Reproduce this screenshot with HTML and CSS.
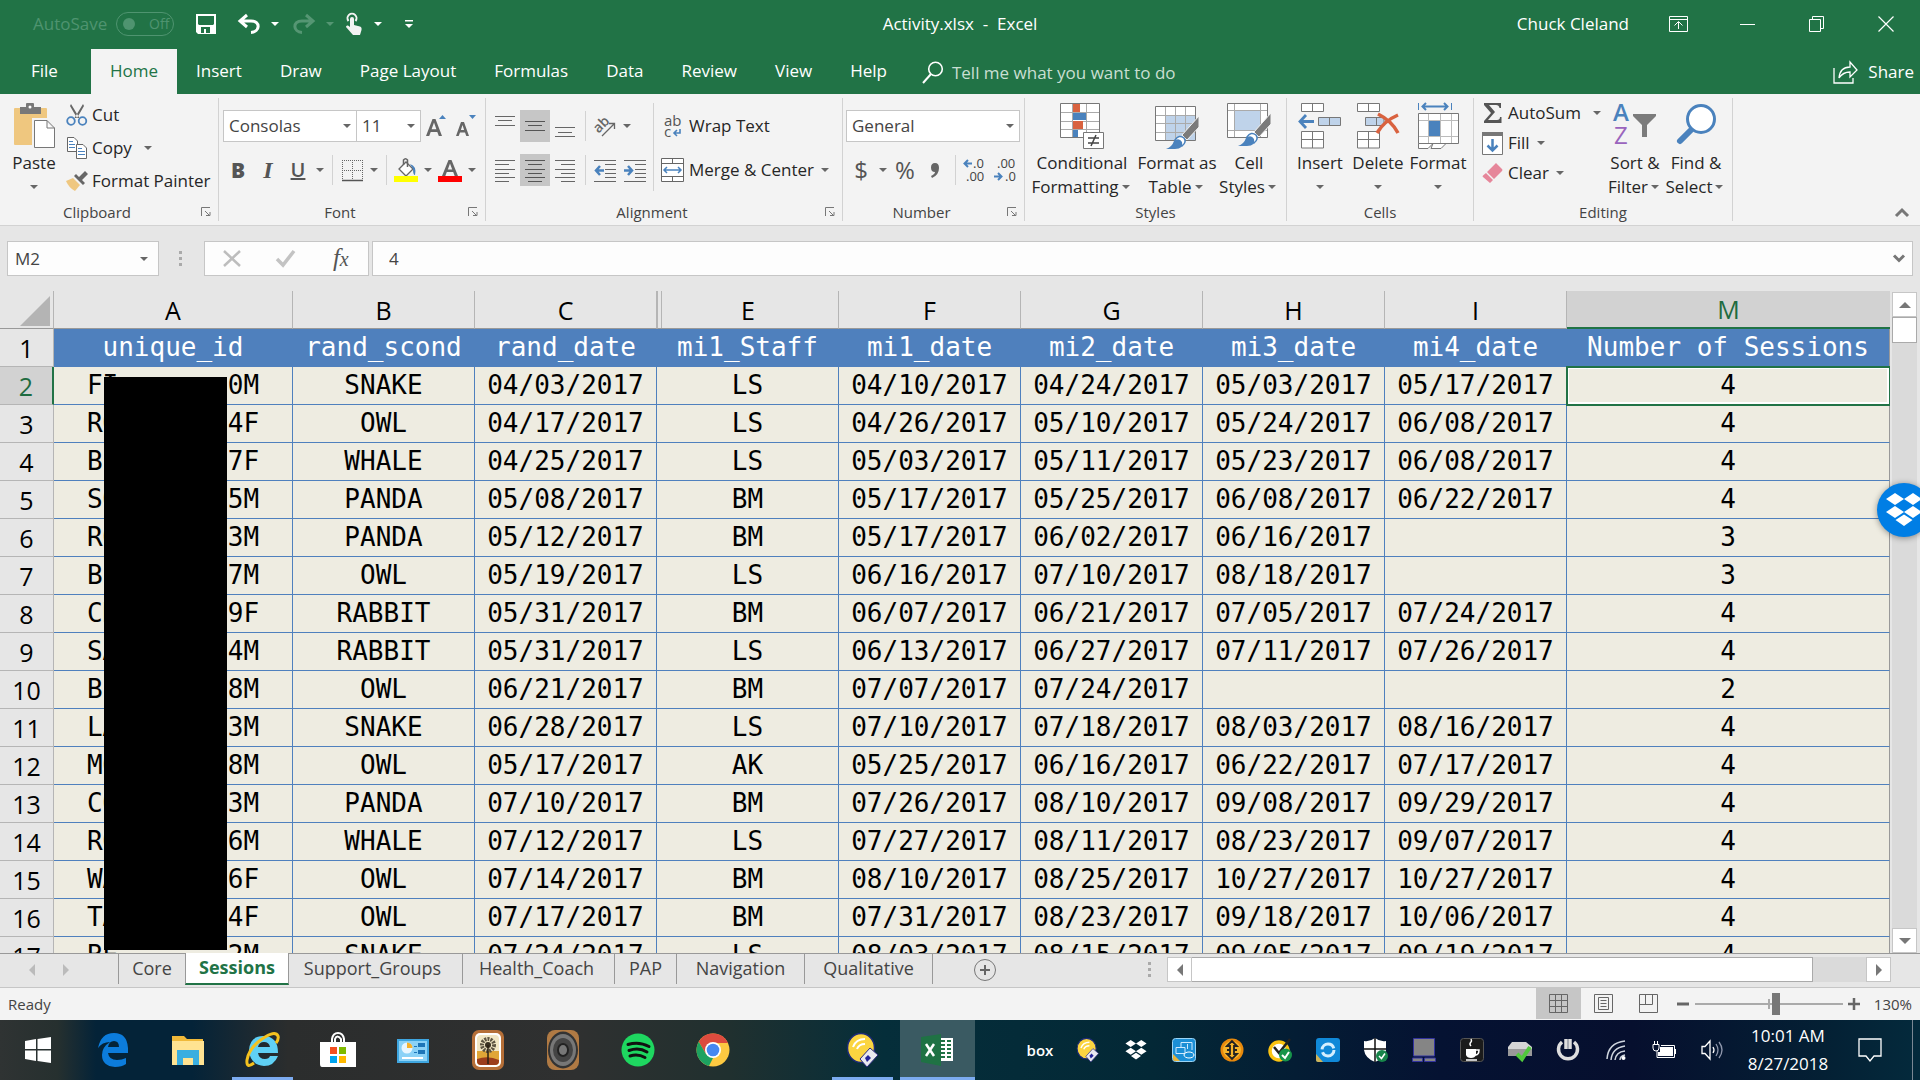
FILE: index.html
```html
<!DOCTYPE html>
<html lang="en">
<head>
<meta charset="utf-8">
<title>Activity.xlsx - Excel</title>
<link rel="stylesheet" href="styles.css">
</head>
<body>
<header class="titlebar">
  <div class="quick">
    <label class="autosave" for="autosave">AutoSave</label>
    <button class="toggle" id="autosave" disabled><span class="knob"></span>Off</button>
    <button class="qbtn save" aria-label="Save"><svg width="20" height="20" viewBox="0 0 20 20"><path fill="#fff" fill-rule="evenodd" d="M0 0H20V20H2L0 18ZM2 2V10L3 11H17L18 10V2ZM5 13V19H8V15H10V19H14V13Z"/></svg></button>
    <button class="qbtn undo" aria-label="Undo"><svg width="22" height="20" viewBox="0 0 22 20"><path fill="none" stroke="#fff" stroke-width="3" d="M9 1L2 7L9 13M2 7H13C23 7 22 18 13 18.500"/></svg></button><i class="caret light"></i>
    <button class="qbtn redo" aria-label="Redo"><svg width="22" height="20" viewBox="0 0 22 20"><path fill="none" stroke="#559673" stroke-width="3" d="M13 1L20 7L13 13M20 7H9C-1 7 0 18 9 18.500"/></svg></button><i class="caret dim"></i>
    <button class="qbtn touch" aria-label="Touch mode"><svg width="18" height="22" viewBox="0 0 18 22"><path fill="#f3f3f3" d="M5 6a2 2 0 0 1 4 0V12L15 13.500Q17 14 16.500 17L15 22H8L1 14Q1 12 3 12.500L5 14Z"/><path d="M3.500 8A4.500 4.500 0 1 1 10.500 8" fill="none" stroke="#f3f3f3" stroke-width="2"/></svg></button><i class="caret light"></i>
    <button class="qbtn custom" aria-label="Customize toolbar"><svg width="8" height="8" viewBox="0 0 8 8"><path fill="#fff" d="M0 0H8V1.500H0ZM0 4H8L4 8Z"/></svg></button>
  </div>
  <div class="doc">Activity.xlsx&nbsp; -&nbsp; Excel</div>
  <div class="window">
    <span class="user">Chuck Cleland</span>
    <button aria-label="Ribbon options"><svg width="19" height="16" viewBox="0 0 19 16"><path fill="none" stroke="#fff" d="M.5.5H18.500V15.500H.5ZM.5 3.500H18.500M9.500 13V6M5.500 9.500L9.500 5.500L13.500 9.500"/></svg></button>
    <button aria-label="Minimize"><svg width="15" height="16" viewBox="0 0 15 16"><path stroke="#fff" d="M0 8.500H15"/></svg></button>
    <button aria-label="Restore"><svg width="15" height="16" viewBox="0 0 15 16"><path fill="none" stroke="#fff" d="M.5 3.500H11.500V15.500H.5ZM3.500 3.500V.5H14.500V12.500H11.500"/></svg></button>
    <button aria-label="Close"><svg width="16" height="16" viewBox="0 0 16 16"><path stroke="#fff" stroke-width="1.200" d="M.5.5L15.500 15.500M15.500.5L.5 15.500"/></svg></button>
  </div>
</header>
<nav class="tabs">
  <button class="file">File</button><button class="active">Home</button><button>Insert</button><button>Draw</button><button>Page Layout</button><button>Formulas</button><button>Data</button><button>Review</button><button>View</button><button>Help</button>
  <button class="tell"><svg width="22" height="24" viewBox="0 0 22 24"><circle cx="13.500" cy="8" r="6.800" fill="none" stroke="#fff" stroke-width="1.600"/><path d="M9 13L1 22" stroke="#fff" stroke-width="2"/></svg>Tell me what you want to do</button>
  <button class="share"><svg width="25" height="23" viewBox="0 0 25 23"><path fill="none" stroke="#fff" stroke-width="1.300" d="M1 7V22H20V17M6 17Q7 6 17 6V1L24 9L17 16V11Q10 11 6 17Z"/></svg>Share</button>
</nav>

<section class="ribbon">
  <div class="group g-clip">
    <div class="body">
      <button class="big paste"><svg width="42" height="46" viewBox="0 0 42 46"><path fill="#efc77f" d="M2 5H33Q34 5 34 6V42H2Q1 42 1 41V6Q1 5 2 5Z"/><path fill="#787878" d="M7 11V4H13V1Q13 0 14 0H20Q21 0 21 1V4H28V11Z"/><circle cx="17" cy="4" r="1.500" fill="#fff"/><path fill="#fff" stroke="#f3f3f3" stroke-width="4" d="M21 17H34L41 24V45H21Z"/><path fill="#fff" stroke="#777" d="M21.500 17.500H34L41.500 25V44.500H21.500ZM34 17.500V25H41.500"/></svg><span>Paste</span><span><i class="caret"></i></span></button>
      <div class="rows tall">
        <button><svg width="22" height="22" viewBox="0 0 22 22"><path fill="#666" d="M5 0L13.500 14H11L4 2ZM17 0L8.500 14H11L18 2Z"/><g fill="none" stroke="#4a82bd" stroke-width="1.800"><circle cx="5" cy="17" r="3.800"/><circle cx="16.500" cy="17" r="3.800"/></g></svg>Cut</button>
        <button><svg width="22" height="22" viewBox="0 0 22 22"><g fill="#fff" stroke="#666"><path d="M1.500.5H8L11.500 4V14.500H1.500Z"/><path d="M10.500 7.500H17L20.500 11V21.500H10.500Z"/></g><path stroke="#4a82bd" d="M3 4.500H7M3 7.500H9M3 10.500H9M12 11.500H16M12 14.500H19M12 17.500H19"/></svg>Copy<i class="caret wide"></i></button>
        <button><svg width="22" height="20" viewBox="0 0 22 20"><path fill="#efc77f" d="M0 10L7 7L14 14L9 20Q3 17 0 10Z"/><path fill="#666" d="M8 5L10 3L13 6L19 0L22 3L16 9L19 12L17 14Z"/></svg>Format Painter</button>
      </div>
    </div>
    <div class="foot"><span>Clipboard</span><button aria-label="Clipboard settings"><svg width="10" height="10" viewBox="0 0 10 10"><path fill="none" stroke="#777" d="M.5 9V.5H9M4 4L8 8M9 5V8.500H5"/></svg></button></div>
  </div>

  <div class="group g-font">
    <div class="body lines">
      <div class="line">
        <select class="combo font-name" aria-label="Font"><option>Consolas</option></select><select class="combo font-size" aria-label="Font size"><option>11</option></select>
        <button class="ic" aria-label="Increase font size"><svg width="20" height="22" viewBox="0 0 20 22"><path fill="#666" fill-rule="evenodd" d="M0 21L6.500 4H9.500L16 21H12.800L11.300 17H4.700L3.200 21ZM5.600 14.300H10.400L8 7.500Z"/><path fill="#4a82bd" d="M13 4L16.500 0L20 4Z"/></svg></button>
        <button class="ic" aria-label="Decrease font size"><svg width="20" height="22" viewBox="0 0 20 22"><path fill="#666" fill-rule="evenodd" d="M0 21L5 7H8L13 21H10.300L9 17.500H4L2.700 21ZM4.900 15H8.100L6.500 10Z"/><path fill="#4a82bd" d="M13 0H20L16.500 4Z"/></svg></button>
      </div>
      <div class="line">
        <button class="ic bold">B</button><button class="ic italic">I</button><button class="ic under">U</button><i class="caret"></i><i class="sep"></i>
        <button class="ic" aria-label="Borders"><svg width="21" height="21" viewBox="0 0 21 21"><path fill="none" stroke="#666" stroke-dasharray="1 1" d="M0 .5H21M.5 0V20M20.500 0V20M10.500 0V20M0 10.500H21"/><path stroke="#555" stroke-width="1.500" d="M0 20.500H21"/></svg></button><i class="caret"></i><i class="sep"></i>
        <button class="ic" aria-label="Fill color"><svg width="24" height="24" viewBox="0 0 24 24"><path fill="#fff" stroke="#666" stroke-width="1.300" d="M5 11L12 4L19 11L12 18Z"/><path fill="none" stroke="#666" stroke-width="1.500" d="M9.500 7V2Q11.500-.5 13.500 2V9"/><path fill="#4a82bd" d="M16 6Q23 8 21 17Q19 17 19 11Z"/><path fill="#ff0" d="M0 18H24V24H0Z"/></svg></button><i class="caret"></i>
        <button class="ic" aria-label="Font color"><svg width="24" height="24" viewBox="0 0 24 24"><path fill="#666" fill-rule="evenodd" d="M4 18L10.500 2H13.500L20 18H16.700L15.200 14H8.800L7.300 18ZM9.800 11.500H14.200L12 5.500Z"/><path fill="red" d="M0 18H24V24H0Z"/></svg></button><i class="caret"></i>
      </div>
    </div>
    <div class="foot"><span>Font</span><button aria-label="Font settings"><svg width="10" height="10" viewBox="0 0 10 10"><path fill="none" stroke="#777" d="M.5 9V.5H9M4 4L8 8M9 5V8.500H5"/></svg></button></div>
  </div>

  <div class="group g-align">
    <div class="body">
      <div class="lines">
        <div class="line">
          <button class="ic" aria-label="Top align"><svg width="20" height="24" viewBox="0 0 20 24"><path stroke="#666" d="M0 2.500H20M3 6.500H17M0 11.500H20"/></svg></button><button class="ic on" aria-label="Middle align"><svg width="20" height="24" viewBox="0 0 20 24"><path stroke="#555" d="M0 7.500H20M3 11.500H17M0 16.500H20"/></svg></button><button class="ic" aria-label="Bottom align"><svg width="20" height="24" viewBox="0 0 20 24"><path stroke="#666" d="M0 13.500H20M3 18.500H17M0 22.500H20"/></svg></button><i class="sep"></i>
          <button class="ic orient" aria-label="Orientation"><svg width="22" height="22" viewBox="0 0 22 22"><text x="0" y="14" transform="rotate(-45 8 11)" font-family="Open Sans, sans-serif" font-size="14" font-weight="600" fill="#666">ab</text><path fill="none" stroke="#666" stroke-width="1.300" d="M8 21L20 9M15 8.500H20.500V14"/></svg></button><i class="caret"></i>
        </div>
        <div class="line">
          <button class="ic" aria-label="Align left"><svg width="20" height="24" viewBox="0 0 20 24"><path stroke="#666" d="M0 2.500H20M0 6.500H14M0 11.500H20M0 15.500H14M0 19.500H20M0 23.500H14"/></svg></button><button class="ic on" aria-label="Center"><svg width="20" height="24" viewBox="0 0 20 24"><path stroke="#555" d="M0 2.500H20M3 6.500H17M0 11.500H20M3 15.500H17M0 19.500H20M3 23.500H17"/></svg></button><button class="ic" aria-label="Align right"><svg width="20" height="24" viewBox="0 0 20 24"><path stroke="#666" d="M0 2.500H20M6 6.500H20M0 11.500H20M6 15.500H20M0 19.500H20M6 23.500H20"/></svg></button><i class="sep"></i>
          <button class="ic" aria-label="Decrease indent"><svg width="22" height="24" viewBox="0 0 22 24"><path stroke="#666" d="M0 2.500H22M11 6.500H22M11 11.500H22M11 15.500H22M11 19.500H22M0 23.500H22"/><path fill="none" stroke="#4a82bd" stroke-width="2.500" d="M6 8L2 12.500L6 17M2 12.500H10"/></svg></button><button class="ic" aria-label="Increase indent"><svg width="22" height="24" viewBox="0 0 22 24"><path stroke="#666" d="M0 2.500H22M11 6.500H22M11 11.500H22M11 15.500H22M11 19.500H22M0 23.500H22"/><path fill="none" stroke="#4a82bd" stroke-width="2.500" d="M4 8L8 12.500L4 17M0 12.500H8"/></svg></button>
        </div>
      </div>
      <div class="lines merge">
        <button class="line"><svg width="24" height="24" viewBox="0 0 24 24"><g font-family="Open Sans, sans-serif" font-size="15" fill="#555"><text x="3" y="12">ab</text><text x="3" y="23">c</text></g><path fill="none" stroke="#4a82bd" stroke-width="1.600" d="M19 15V19H13M16 16L13 19L16 22"/></svg>Wrap Text</button>
        <button class="line"><svg width="24" height="24" viewBox="0 0 24 24"><path fill="#fff" stroke="#666" d="M.5.5H22.500V23.500H.5ZM.5 5.500H22.500M.5 18.500H22.500M11.500.5V5.500M11.500 18.500V23.500"/><path fill="none" stroke="#4a82bd" stroke-width="1.500" d="M3 12H20M6 9L3 12L6 15M17 9L20 12L17 15"/></svg>Merge &amp; Center<i class="caret"></i></button>
      </div>
    </div>
    <div class="foot"><span>Alignment</span><button aria-label="Alignment settings"><svg width="10" height="10" viewBox="0 0 10 10"><path fill="none" stroke="#777" d="M.5 9V.5H9M4 4L8 8M9 5V8.500H5"/></svg></button></div>
  </div>

  <div class="group g-num">
    <div class="body lines">
      <div class="line"><select class="combo num-format" aria-label="Number format"><option>General</option></select></div>
      <div class="line">
        <button class="ic sym">$</button><i class="caret"></i><button class="ic sym">%</button><button class="ic comma" aria-label="Comma style"><svg width="10" height="15" viewBox="0 0 10 15"><path fill="#666" d="M5 0Q9 0 9 5Q9 12 2 15L1 13Q5 11 5 9Q1 9 1 4.500Q1 0 5 0Z"/></svg></button><i class="sep"></i>
        <button class="ic" aria-label="Increase decimal"><svg width="24" height="26" viewBox="0 0 24 26"><g font-family="Open Sans, sans-serif" font-size="13" fill="#444"><text x="10" y="11">.0</text><text x="3" y="24">.00</text></g><path fill="none" stroke="#4a82bd" stroke-width="2" d="M5 3L1.500 6.500L5 10M1.500 6.500H9"/></svg></button><button class="ic" aria-label="Decrease decimal"><svg width="24" height="26" viewBox="0 0 24 26"><g font-family="Open Sans, sans-serif" font-size="13" fill="#444"><text x="4" y="11">.00</text><text x="12" y="24">.0</text></g><path fill="none" stroke="#4a82bd" stroke-width="2" d="M5 16L8.500 19.500L5 23M1 19.500H8.500"/></svg></button>
      </div>
    </div>
    <div class="foot"><span>Number</span><button aria-label="Number settings"><svg width="10" height="10" viewBox="0 0 10 10"><path fill="none" stroke="#777" d="M.5 9V.5H9M4 4L8 8M9 5V8.500H5"/></svg></button></div>
  </div>

  <div class="group g-styles">
    <div class="body">
      <button class="big cond"><svg width="44" height="46" viewBox="0 0 44 46"><path fill="#fff" stroke="#777" d="M.5.500H39.500V34.500H.5Z"/><path fill="none" stroke="#aaa" d="M12.500 1V34M26.500 1V34M1 9.500H39M1 18.500H39M1 26.500H39"/><path fill="#d9623f" d="M13 1H20V9H13ZM13 18H23V26H13Z"/><path fill="#4a82bd" d="M13 10H26V17H13ZM13 27H18V34H13Z"/><path fill="#fff" stroke="#777" d="M23.500 29.500H43.500V45.500H23.500Z"/><path stroke="#444" stroke-width="1.500" d="M28 35H39M28 40H39M36 32L31 43"/></svg><span>Conditional</span><span>Formatting <i class="caret"></i></span></button>
      <button class="big tbl"><svg width="44" height="46" viewBox="0 0 44 46"><path fill="#fff" stroke="#777" d="M.5 3.500H40.500V37.500H.5Z"/><path fill="#bfd3ea" d="M10 12H40V37H10Z"/><path stroke="#aaa" d="M10.500 4V37M20.500 4V37M30.500 4V37M1 12.500H40M1 20.500H40M1 29.500H40"/><path fill="#7b7b7b" stroke="#f3f3f3" d="M44 13V24L32 37L27 32Z"/><path fill="#fff" stroke="#4a82bd" stroke-width="1.500" d="M20 37Q24 31 29 35Q32 39 27 43Z"/><path fill="#4a82bd" d="M11 46Q17 44 19 38Q24 34 27 39Q29 46 20 46Z"/></svg><span>Format as</span><span>Table <i class="caret"></i></span></button>
      <button class="big cell"><svg width="44" height="46" viewBox="0 0 44 46"><path fill="#fff" stroke="#777" d="M.5.500H40.500V34.500H.5Z"/><path fill="#bfd3ea" d="M7 8H34V27H7Z"/><path fill="none" stroke="#aaa" d="M7.500 1V34M33.500 1V34M1 7.500H40M1 27.500H40"/><path fill="#7b7b7b" stroke="#f3f3f3" d="M44 10V21L32 34L27 29Z"/><path fill="#fff" stroke="#4a82bd" stroke-width="1.500" d="M20 34Q24 28 29 32Q32 36 27 40Z"/><path fill="#4a82bd" d="M11 43Q17 41 19 35Q24 31 27 36Q29 43 20 43Z"/></svg><span>Cell</span><span>Styles <i class="caret"></i></span></button>
    </div>
    <div class="foot"><span>Styles</span></div>
  </div>

  <div class="group g-cells">
    <div class="body">
      <button class="big ins"><svg width="44" height="46" viewBox="0 0 44 46"><path fill="#fff" stroke="#777" d="M3.500.500H25.500V8.500H3.500ZM14.500.500V8.500M3.500 28.500H25.500V45H3.500ZM3.500 36.500H25.500M14.500 28.500V45"/><path fill="#bfd3ea" stroke="#777" d="M20.500 14.500H42.500V22.500H20.500ZM31.500 14.500V22.500"/><path fill="none" stroke="#4a82bd" stroke-width="2.800" d="M8 12L2 18.500L8 25M2 18.500H16"/></svg><span>Insert</span><span><i class="caret"></i></span></button>
      <button class="big del"><svg width="44" height="46" viewBox="0 0 44 46"><path fill="#fff" stroke="#777" d="M1.500.500H23.500V8.500H1.500ZM12.500.500V8.500M1.500 28.500H23.500V45H1.500ZM1.500 36.500H23.500M12.500 28.500V45"/><path fill="#bfd3ea" stroke="#777" d="M9.500 14.500H28V22.500H9.500ZM20.500 14.500V22.500"/><path fill="none" stroke="#d9623f" stroke-width="3.500" d="M22 11Q36 18 42 30M42 12Q28 18 21 30"/></svg><span>Delete</span><span><i class="caret"></i></span></button>
      <button class="big fmt"><svg width="44" height="46" viewBox="0 0 44 46"><path stroke="#4a82bd" d="M2.500 0V7M35.500 0V7"/><path fill="none" stroke="#4a82bd" stroke-width="2" d="M7 3.500H31M10 0L6.500 3.500L10 7M28 0L31.500 3.500L28 7"/><path fill="#fff" stroke="#777" d="M2.500 10.500H42.500V40.500H2.500Z"/><path stroke="#bbb" d="M12.500 11V40M24.500 11V40M35.500 11V40M3 17.500H42M3 33.500H42"/><path fill="#4a82bd" d="M13 18H24V33H13Z"/><path fill="#fff" stroke="#777" d="M2.500 40.500H17L12 45.500H2.500ZM17 40.500H30L25 45.500H15Z"/></svg><span>Format</span><span><i class="caret"></i></span></button>
    </div>
    <div class="foot"><span>Cells</span></div>
  </div>

  <div class="group g-edit">
    <div class="body">
      <div class="rows">
        <button><svg width="22" height="22" viewBox="0 0 22 22"><path fill="#555" d="M2 1H19V6H17.500Q17 3 14 3H7L13 10L6 18H15Q18 18 18 15H19.500V21H2V19L9 11L2 3Z"/></svg>AutoSum<i class="caret wide"></i></button>
        <button><svg width="22" height="24" viewBox="0 0 22 24"><path fill="#fff" stroke="#777" d="M.5 1.500H20.500V23.500H.5Z"/><path fill="#777" d="M0 1H21V5H0Z"/><path fill="none" stroke="#4a82bd" stroke-width="2.500" d="M10.500 8V19M5.500 14.500L10.500 19.500L15.500 14.500"/></svg>Fill<i class="caret"></i></button>
        <button><svg width="22" height="22" viewBox="0 0 22 22"><path fill="#e6869a" d="M14 1L20 7Q21 8 20 9L12 17L5 10ZM4 11L11 18L8 21L1 15Q0 14 1 13.500Z"/></svg>Clear<i class="caret"></i></button>
      </div>
      <button class="big sort"><svg width="44" height="46" viewBox="0 0 44 46"><g font-family="Open Sans, sans-serif" font-size="24"><text x="0" y="18" font-weight="600" fill="#4a82bd">A</text><text x="1" y="41" fill="#9a64bd">Z</text></g><path fill="#7b7b7b" d="M20 11H43V13L34 22V34H29V22L20 13Z"/></svg><span>Sort &amp;</span><span>Filter <i class="caret"></i></span></button>
      <button class="big find"><svg width="42" height="46" viewBox="0 0 42 46"><circle cx="26" cy="16" r="13.500" fill="#fff" stroke="#4a82bd" stroke-width="3"/><path stroke="#4a82bd" stroke-width="6" stroke-linecap="round" d="M15 28L5 38"/></svg><span>Find &amp;</span><span>Select <i class="caret"></i></span></button>
    </div>
    <div class="foot"><span>Editing</span></div>
  </div>
  <button class="collapse" aria-label="Collapse ribbon"><svg width="14" height="9" viewBox="0 0 14 9"><path fill="none" stroke="#777" stroke-width="3" d="M1 8L7 2L13 8"/></svg></button>
</section>

<section class="formula">
  <select class="namebox" aria-label="Name box"><option>M2</option></select>
  <i class="dots"></i>
  <div class="fxbox">
    <button aria-label="Cancel"><svg width="18" height="17" viewBox="0 0 18 17"><path stroke="#bdbdbd" stroke-width="2.500" d="M1 1L17 16M17 1L1 16"/></svg></button>
    <button aria-label="Enter"><svg width="20" height="17" viewBox="0 0 20 17"><path fill="none" stroke="#c3c3c3" stroke-width="3.500" d="M1 9L7 15L18 1"/></svg></button>
    <button class="fx" aria-label="Insert function">f<small>x</small></button>
  </div>
  <div class="entry"><input value="4" aria-label="Formula bar"><button aria-label="Expand formula bar"><svg width="12" height="9" viewBox="0 0 12 9"><path fill="none" stroke="#777" stroke-width="3" d="M1 1.500L6 6.500L11 1.500"/></svg></button></div>
</section>

<main class="work">
  <div class="sheet">
    <table class="grid">
      <colgroup><col class="c-num"><col class="c-id"><col class="c"><col class="c"><col class="c"><col class="c"><col class="c"><col class="c"><col class="c"><col></colgroup>
      <thead><tr><th class="corner"><svg width="30" height="30" viewBox="0 0 30 30"><path fill="#b4b4b4" d="M30 0V30H0Z"/></svg></th><th>A</th><th>B</th><th>C</th><th class="gapcol">E</th><th>F</th><th>G</th><th>H</th><th>I</th><th class="sel">M</th></tr></thead>
      <tbody>
      <tr class="names"><th>1</th><td>unique_id</td><td>rand_scond</td><td>rand_date</td><td>mi1_Staff</td><td>mi1_date</td><td>mi2_date</td><td>mi3_date</td><td>mi4_date</td><td>Number of Sessions</td></tr>
      <tr><th class="sel">2</th><td>FI       0M</td><td>SNAKE</td><td>04/03/2017</td><td>LS</td><td>04/10/2017</td><td>04/24/2017</td><td>05/03/2017</td><td>05/17/2017</td><td class="cursor">4</td></tr>
      <tr><th>3</th><td>RO      64F</td><td>OWL</td><td>04/17/2017</td><td>LS</td><td>04/26/2017</td><td>05/10/2017</td><td>05/24/2017</td><td>06/08/2017</td><td>4</td></tr>
      <tr><th>4</th><td>BE       7F</td><td>WHALE</td><td>04/25/2017</td><td>LS</td><td>05/03/2017</td><td>05/11/2017</td><td>05/23/2017</td><td>06/08/2017</td><td>4</td></tr>
      <tr><th>5</th><td>SO      65M</td><td>PANDA</td><td>05/08/2017</td><td>BM</td><td>05/17/2017</td><td>05/25/2017</td><td>06/08/2017</td><td>06/22/2017</td><td>4</td></tr>
      <tr><th>6</th><td>RO      83M</td><td>PANDA</td><td>05/12/2017</td><td>BM</td><td>05/17/2017</td><td>06/02/2017</td><td>06/16/2017</td><td></td><td>3</td></tr>
      <tr><th>7</th><td>BE       7M</td><td>OWL</td><td>05/19/2017</td><td>LS</td><td>06/16/2017</td><td>07/10/2017</td><td>08/18/2017</td><td></td><td>3</td></tr>
      <tr><th>8</th><td>CH       9F</td><td>RABBIT</td><td>05/31/2017</td><td>BM</td><td>06/07/2017</td><td>06/21/2017</td><td>07/05/2017</td><td>07/24/2017</td><td>4</td></tr>
      <tr><th>9</th><td>SA      64M</td><td>RABBIT</td><td>05/31/2017</td><td>LS</td><td>06/13/2017</td><td>06/27/2017</td><td>07/11/2017</td><td>07/26/2017</td><td>4</td></tr>
      <tr><th>10</th><td>BE      68M</td><td>OWL</td><td>06/21/2017</td><td>BM</td><td>07/07/2017</td><td>07/24/2017</td><td></td><td></td><td>2</td></tr>
      <tr><th>11</th><td>LA       3M</td><td>SNAKE</td><td>06/28/2017</td><td>LS</td><td>07/10/2017</td><td>07/18/2017</td><td>08/03/2017</td><td>08/16/2017</td><td>4</td></tr>
      <tr><th>12</th><td>MO      68M</td><td>OWL</td><td>05/17/2017</td><td>AK</td><td>05/25/2017</td><td>06/16/2017</td><td>06/22/2017</td><td>07/17/2017</td><td>4</td></tr>
      <tr><th>13</th><td>CO      63M</td><td>PANDA</td><td>07/10/2017</td><td>BM</td><td>07/26/2017</td><td>08/10/2017</td><td>09/08/2017</td><td>09/29/2017</td><td>4</td></tr>
      <tr><th>14</th><td>RO      66M</td><td>WHALE</td><td>07/12/2017</td><td>LS</td><td>07/27/2017</td><td>08/11/2017</td><td>08/23/2017</td><td>09/07/2017</td><td>4</td></tr>
      <tr><th>15</th><td>WA      66F</td><td>OWL</td><td>07/14/2017</td><td>BM</td><td>08/10/2017</td><td>08/25/2017</td><td>10/27/2017</td><td>10/27/2017</td><td>4</td></tr>
      <tr><th>16</th><td>TA      64F</td><td>OWL</td><td>07/17/2017</td><td>BM</td><td>07/31/2017</td><td>08/23/2017</td><td>09/18/2017</td><td>10/06/2017</td><td>4</td></tr>
      <tr><th>17</th><td>BE       2M</td><td>SNAKE</td><td>07/24/2017</td><td>LS</td><td>08/03/2017</td><td>08/15/2017</td><td>09/05/2017</td><td>09/19/2017</td><td>4</td></tr>
      </tbody>
    </table>
    <div class="redaction"></div>
  </div>
  <div class="vscroll">
    <button aria-label="Scroll up"><svg width="12" height="6" viewBox="0 0 12 6"><path fill="#777" d="M6 0L12 6H0Z"/></svg></button>
    <div class="thumb"></div><div class="track"></div>
    <button aria-label="Scroll down"><svg width="12" height="6" viewBox="0 0 12 6"><path fill="#777" d="M0 0H12L6 6Z"/></svg></button>
  </div>
  <button class="dropbox" aria-label="Dropbox"><svg width="36" height="34" viewBox="0 0 36 34"><path fill="#fff" d="M9 0L18 6L9 12L0 6ZM27 0L36 6L27 12L18 6ZM0 19L9 13L18 19L9 25ZM27 13L36 19L27 25L18 19ZM18 21.500L26.500 27L18 33L9.500 27Z"/></svg></button>
</main>

<nav class="sheets">
  <div class="arrows"><button aria-label="Previous sheet"><svg width="6" height="12" viewBox="0 0 6 12"><path fill="#bbb" d="M6 0V12L0 6Z"/></svg></button><button aria-label="Next sheet"><svg width="6" height="12" viewBox="0 0 6 12"><path fill="#bbb" d="M0 0V12L6 6Z"/></svg></button></div>
  <button class="tab t-core">Core</button><button class="tab t-ses active">Sessions</button><button class="tab t-sup">Support_Groups</button><button class="tab t-hea">Health_Coach</button><button class="tab t-pap">PAP</button><button class="tab t-nav">Navigation</button><button class="tab t-nav">Qualitative</button>
  <button class="add" aria-label="New sheet"><svg width="24" height="24" viewBox="0 0 24 24"><circle cx="12" cy="12" r="10.500" fill="none" stroke="#777"/><path stroke="#666" stroke-width="2" d="M12 7V17M7 12H17"/></svg></button>
  <i class="dots"></i>
  <div class="hscroll">
    <button aria-label="Scroll left"><svg width="6" height="12" viewBox="0 0 6 12"><path fill="#777" d="M6 0V12L0 6Z"/></svg></button>
    <div class="thumb"></div><div class="track"></div>
    <button aria-label="Scroll right"><svg width="6" height="12" viewBox="0 0 6 12"><path fill="#777" d="M0 0V12L6 6Z"/></svg></button>
  </div>
</nav>

<footer class="status">
  <span class="ready">Ready</span>
  <button class="view on" aria-label="Normal view"><svg width="20" height="20" viewBox="0 0 20 20"><path fill="none" stroke="#666" d="M.5.5H18.500V18.500H.5ZM6.500.5V18.500M12.500.5V18.500M.5 6.500H18.500M.5 12.500H18.500"/></svg></button><button class="view" aria-label="Page layout view"><svg width="20" height="20" viewBox="0 0 20 20"><path fill="none" stroke="#666" d="M.5.5H18.500V18.500H.5ZM4.500 3.500H14.500V15.500H4.500ZM6.500 6.500H12.500M6.500 9.500H12.500M6.500 12.500H12.500"/></svg></button><button class="view" aria-label="Page break view"><svg width="20" height="20" viewBox="0 0 20 20"><path fill="none" stroke="#666" d="M.5.5H18.500V18.500H.5ZM6.500.5V10.500H13.500V.5M.5 10.500H13"/></svg></button>
  <button class="zoom" aria-label="Zoom out"><svg width="12" height="12" viewBox="0 0 12 12"><path stroke="#666" stroke-width="3" d="M0 6H12"/></svg></button>
  <input class="slider" type="range" min="0" max="100" value="55" aria-label="Zoom">
  <button class="zoom" aria-label="Zoom in"><svg width="12" height="12" viewBox="0 0 12 12"><path stroke="#666" stroke-width="2.500" d="M0 6H12M6 0V12"/></svg></button>
  <span class="pct">130%</span>
</footer>

<footer class="taskbar">
  <div class="apps">
    <button aria-label="Start"><svg width="26" height="26" viewBox="0 0 26 26"><path fill="#fff" d="M0 4L11 2V12H0ZM12.500 2L26 0V12H12.500ZM0 13.500H11V24L0 22ZM12.500 13.500H26V26L12.500 24Z"/></svg></button>
    <button aria-label="Edge"><svg width="32" height="34" viewBox="0 0 32 34"><path fill="#0c7cdc" fill-rule="evenodd" d="M1 15Q4 0 17 0Q30 0 31 15V20H11Q12 27 20 27Q25 27 29 25V31Q25 34 18 34Q5 33 5 22Q5 14 13 9Q5 9 1 15ZM11 14H22Q22 8 17 8Q12 8 11 14Z"/></svg></button>
    <button aria-label="File Explorer"><svg width="34" height="34" viewBox="0 0 34 34"><path fill="#f0b93a" d="M1 3H13L16 6H32V12H1Z"/><path fill="#ffe392" d="M1 8H33V32H1Z"/><path fill="#3aaee0" d="M6 17H28V32H22V25H12V32H6Z"/></svg></button>
    <button class="open" aria-label="Internet Explorer"><svg width="36" height="36" viewBox="0 0 36 36"><path fill="#5fd0f5" fill-rule="evenodd" d="M4 18Q5 4 18 4Q33 4 33 21H13Q14 27 20 27Q24 27 25 24H33Q29 34 19 34Q5 33 4 18ZM13 15H25Q24 10 19 10Q14 10 13 15Z"/><path fill="none" stroke="#f4c21f" stroke-width="3" d="M9 31Q1 37 2 28Q4 16 17 7Q30-2 33 4Q34 7 31 11"/></svg></button>
    <button aria-label="Microsoft Store"><svg width="36" height="36" viewBox="0 0 36 36"><path fill="none" stroke="#fff" stroke-width="2" d="M12 11V7Q13 1 18 1Q23 1 24 7V11M15 11V7Q17 2 21 7V11"/><path fill="#fff" d="M0 10H36V35H2Q0 35 0 32Z"/><path fill="#f25022" d="M10 15H17V22H10Z"/><path fill="#7fba00" d="M19 15H26V22H19Z"/><path fill="#00a4ef" d="M10 24H17V31H10Z"/><path fill="#ffb900" d="M19 24H26V31H19Z"/></svg></button>
    <button aria-label="Control Panel"><svg width="32" height="26" viewBox="0 0 32 26"><path fill="#3fa6e0" d="M0 2H32V26H0Z"/><path fill="#8bd2f7" d="M2 4H30V24H2Z"/><circle cx="10" cy="11" r="5.500" fill="#e8f6ff"/><path fill="#f5b12a" d="M10 11V5.500A5.500 5.500 0 0 1 15.500 11Z"/><path fill="#1d75b8" d="M21 6H28V10H21ZM21 13H28V17H21ZM17 9H20V10H17ZM17 15H20V16H17Z"/><path fill="#fff" d="M5 20H26V22H5Z"/></svg></button>
    <button aria-label="Dandelion"><svg width="34" height="42" viewBox="0 0 34 42"><rect x="1" y="1" width="32" height="40" rx="7" fill="#b56f38"/><rect x="4" y="4" width="26" height="34" rx="5" fill="#fff"/><rect x="6" y="6" width="22" height="30" rx="4" fill="#f1e6c4"/><path fill="#e0a637" d="M6 22H28V32Q28 36 24 36H10Q6 36 6 32Z"/><path fill="#9b3d1c" d="M6 30Q17 26 28 31V32Q28 36 24 36H10Q6 36 6 32Z"/><circle cx="17" cy="16" r="6" fill="none" stroke="#5d5442" stroke-width="4" stroke-dasharray="2 1"/><circle cx="17" cy="16" r="3" fill="#3a3122"/><path stroke="#2b2115" stroke-width="1.500" d="M17 16V35"/></svg></button>
    <button aria-label="Speaker"><svg width="34" height="42" viewBox="0 0 34 42"><rect x="1" y="1" width="32" height="40" rx="8" fill="#b07a44"/><ellipse cx="17" cy="21" rx="15" ry="18.500" fill="#333"/><ellipse cx="17" cy="21" rx="13" ry="16" fill="#777"/><ellipse cx="17" cy="21" rx="10" ry="12" fill="#444"/><ellipse cx="17" cy="21" rx="6" ry="7" fill="#222"/><ellipse cx="17" cy="21" rx="4" ry="5" fill="#777"/></svg></button>
    <button aria-label="Spotify"><svg width="34" height="34" viewBox="0 0 34 34"><circle cx="17" cy="17" r="16.500" fill="#1ed760"/><path fill="none" stroke="#111" stroke-width="3" stroke-linecap="round" d="M7 11.500Q18 8 28 13.500M8 17.500Q18 14 26 19M9 23Q17 20.500 24 24.500"/></svg></button>
    <button aria-label="Chrome"><svg width="34" height="34" viewBox="0 0 34 34"><circle cx="17" cy="17" r="16.500" fill="#fdc941"/><path fill="#dd4b3e" d="M2.700 8.700A16.500 16.500 0 0 1 32 10H17L10 21Z"/><path fill="#1da260" d="M2.700 8.700L10 21L17 25L13 33A16.500 16.500 0 0 1 2.700 8.700Z"/><circle cx="17" cy="17" r="8" fill="#fff"/><circle cx="17" cy="17" r="6.300" fill="#4688f1"/></svg></button>
    <span></span>
    <button class="open" aria-label="USB utility"><svg width="34" height="34" viewBox="0 0 34 34"><ellipse cx="15" cy="15" rx="13.500" ry="14.500" fill="#fbd540" stroke="#1d2b78" stroke-width="1.500"/><path fill="none" stroke="#fff" stroke-width="2" d="M7 14Q10 6 19 6M11 16Q13 11 19 11"/><path fill="#e9e9ef" stroke="#2b2b80" d="M14 26L24 15L32 22L21 34Z"/><path fill="#23239a" d="M19 25L22 22L25 25L21 29Z"/></svg></button>
    <button class="open current" aria-label="Excel"><svg width="34" height="32" viewBox="0 0 34 32"><path fill="#fff" d="M17 4H32V27H17Z"/><path fill="#1f7244" d="M0 3L20 0V32L0 28ZM20 6H24V8H20ZM20 10H24V12H20ZM20 14H24V16H20ZM20 18H24V20H20ZM20 22H24V24H20ZM26 6H30V8H26ZM26 10H30V12H26ZM26 14H30V16H26ZM26 18H30V20H26ZM26 22H30V24H26Z"/><path stroke="#fff" stroke-width="2.500" d="M5 10L13 22M13 10L5 22"/></svg></button>
  </div>
  <div class="tray">
    <button class="box">box</button>
    <button aria-label="USB utility"><svg width="24" height="24" viewBox="0 0 34 34"><ellipse cx="15" cy="15" rx="13.500" ry="14.500" fill="#fbd540" stroke="#1d2b78" stroke-width="1.500"/><path fill="none" stroke="#fff" stroke-width="2" d="M7 14Q10 6 19 6M11 16Q13 11 19 11"/><path fill="#e9e9ef" stroke="#2b2b80" d="M14 26L24 15L32 22L21 34Z"/><path fill="#23239a" d="M19 25L22 22L25 25L21 29Z"/></svg></button>
    <button aria-label="Dropbox"><svg width="22" height="20" viewBox="0 0 36 34"><path fill="#fff" d="M9 0L18 6L9 12L0 6ZM27 0L36 6L27 12L18 6ZM0 19L9 13L18 19L9 25ZM27 13L36 19L27 25L18 19ZM18 21.500L26.500 27L18 33L9.500 27Z"/></svg></button>
    <button aria-label="Intel graphics"><svg width="24" height="24" viewBox="0 0 24 24"><rect x=".5" y=".5" width="23" height="23" rx="3" fill="#1c8fd6" stroke="#9bd4f5"/><path fill="#e9b43a" d="M1 16L8 23H3Q1 23 1 21Z"/><path fill="none" stroke="#cfeaff" d="M4 9.500H13V15.500H4ZM9 9V4.500H20V12M15.500 6V11"/><ellipse cx="17" cy="17" rx="5" ry="3" fill="none" stroke="#fff"/></svg></button>
    <button aria-label="Norton power"><svg width="24" height="24" viewBox="0 0 24 24"><circle cx="12" cy="12" r="11.500" fill="#e8890c"/><circle cx="12" cy="12" r="9" fill="#f6b42b"/><path fill="none" stroke="#222" stroke-width="1.800" d="M7 8L12 3L17 8H14V16H17L12 21L7 16H10V8ZM7 12H10M14 12H17"/></svg></button>
    <button aria-label="Norton Security"><svg width="24" height="24" viewBox="0 0 24 24"><circle cx="11" cy="13" r="9" fill="#fff" stroke="#fbc311" stroke-width="3.500"/><path fill="none" stroke="#222" stroke-width="2.500" d="M6 9L11 15L22 1"/><circle cx="17.500" cy="17" r="6.500" fill="#17944a"/><path fill="none" stroke="#fff" stroke-width="2" d="M14 17L17 20L21 14"/></svg></button>
    <button aria-label="Sync"><svg width="24" height="24" viewBox="0 0 24 24"><rect width="24" height="24" rx="3" fill="#1089d8"/><path fill="#d0b458" d="M0 16L7 24H2Q0 24 0 22Z"/><circle cx="12" cy="12" r="6" fill="none" stroke="#d4efff" stroke-width="3" stroke-dasharray="16 3"/></svg></button>
    <button aria-label="Windows Defender"><svg width="24" height="24" viewBox="0 0 24 24"><path fill="#fff" d="M11 0Q16 4 22 3V12Q21 20 11 24Q1 20 0 12V3Q6 4 11 0Z"/><path stroke="#111" stroke-width="1.500" d="M11 0V24M0 11H22"/><circle cx="18" cy="18" r="6" fill="#17854a"/><path fill="none" stroke="#fff" stroke-width="1.500" d="M15 18L17.500 20.500L21 15.500"/></svg></button>
    <button aria-label="Touchpad"><svg width="24" height="24" viewBox="0 0 24 24"><path fill="#858585" stroke="#3333a0" d="M1.500.5H22.500V18H1.500ZM.5 20H10.500V23.500H.5ZM12.500 20H23.500V23.500H12.500Z"/></svg></button>
    <button aria-label="Caffeine"><svg width="24" height="24" viewBox="0 0 24 24"><rect x=".5" y=".5" width="23" height="23" rx="3" fill="#1b1b1b" stroke="#555"/><path fill="#fff" d="M6 11H16V17Q15 20 11 20Q7 20 6 17Z"/><path fill="none" stroke="#fff" stroke-width="1.500" d="M16 12H19Q19 17 15 17M6 22H17M11 8Q9 6 11 4Q12 3 11 1"/></svg></button>
    <button aria-label="Safely remove"><svg width="24" height="24" viewBox="0 0 24 24"><path fill="#d5d5d5" d="M4 4H18L24 9V18H0V9Z"/><path fill="#999" d="M0 11H24V18H0Z"/><path fill="none" stroke="#51c93d" stroke-width="4" d="M9 16L14 21L22 9"/></svg></button>
    <button aria-label="Power"><svg width="24" height="24" viewBox="0 0 24 24"><path fill="none" stroke="#dedede" stroke-width="3.500" d="M6 4A9.500 9.500 0 1 0 18 4M10 1V11M14 1V11"/></svg></button>
    <button aria-label="Wi-Fi"><svg width="20" height="22" viewBox="0 0 20 22"><path fill="none" stroke="#cfd5de" stroke-width="1.500" d="M1 20Q2 4 19 2M5 21Q6 9 19 7M9 21Q10 13 19 12M14 21Q14 17 19 16"/><circle cx="17.500" cy="19" r="2" fill="#fff"/></svg></button>
    <button aria-label="Battery"><svg width="24" height="18" viewBox="0 0 24 18"><path fill="#fff" d="M8 6H21V15H6V11H8Z"/><path fill="none" stroke="#fff" d="M9 4.500H22.500V16.500H5V10M1 3.500H7V7Q7 10 4 10Q1 10 1 7ZM2.500 0V3M5.500 0V3M23.500 8V13"/></svg></button>
    <button aria-label="Volume"><svg width="22" height="20" viewBox="0 0 22 20"><path fill="none" stroke="#fff" stroke-width="1.300" d="M1 6.500H4L9 1V19L4 13.500H1ZM12 7Q14 10 12 13"/><path fill="none" stroke="#8f97ac" stroke-width="1.300" d="M15 4Q19 10 15 16M18 2Q24 10 18 18"/></svg></button>
  </div>
  <div class="clock"><time>10:01 AM</time><time>8/27/2018</time></div>
  <button class="notes" aria-label="Notifications"><svg width="24" height="24" viewBox="0 0 24 24"><path fill="none" stroke="#fff" stroke-width="1.300" d="M1 1H23V18H16L12 23L8 18H1Z"/></svg></button>
  <button class="desk" aria-label="Show desktop"></button>
</footer>
</body>
</html>
```
FILE: styles.css
```css
* { box-sizing: border-box; }
body { margin: 0; height: 100vh; display: flex; flex-direction: column; overflow: hidden; background: #e6e6e6; color: #262626; font: 17px/24px "Open Sans", "Noto Sans", sans-serif; }
button, select, input { font: inherit; color: inherit; border: 0; padding: 0; margin: 0; background: none; border-radius: 0; white-space: nowrap; }
svg { display: block; flex: none; overflow: visible; }
select { appearance: none; }

.caret { display: inline-flex; width: 14px; flex: none; justify-content: center; vertical-align: middle; }
.caret::before { content: ""; border: 4px solid transparent; border-top-color: #666; border-bottom: 0; }
.caret.light::before { border-top-color: #fff; }
.caret.dim::before { border-top-color: #559673; }
.caret.wide { width: 24px; }
.dots { width: 3px; height: 15px; background: repeating-linear-gradient(#aaa 0 3px, transparent 3px 6px); }

/* title bar */
.titlebar { display: grid; grid-template-columns: 1fr auto 1fr; align-items: center; height: 49px; flex: none; padding-bottom: 2px; background: #217346; color: #fff; }
.quick { display: flex; align-items: center; padding-left: 33px; }
.autosave { color: #4f9470; width: 83px; }
.toggle { display: flex; align-items: center; gap: 14px; width: 58px; height: 24px; padding-left: 6px; border: 1px solid #4f9470; border-radius: 12px; color: #4f9470; font-size: 14px; line-height: 20px; }
.knob { width: 12px; height: 12px; border-radius: 50%; background: #4f9470; }
.save { margin-left: 22px; }
.undo { margin: 0 8px 0 22px; }
.redo { margin: 0 8px 0 11px; }
.touch { margin: 0 8px; }
.custom { margin-left: 20px; }
.window { display: flex; align-items: center; justify-content: flex-end; height: 100%; }
.user { margin-right: 15px; }
.window button { width: 69px; height: 100%; display: grid; place-items: center; }

/* ribbon tabs */
.tabs { display: flex; height: 45px; flex: none; background: #217346; color: #fff; }
.tabs button { padding: 0 19px 2px; display: flex; align-items: center; }
.tabs .file { width: 91px; padding-left: 31px; }
.tabs .active { background: #f3f3f3; color: #217346; }
.tabs .tell { gap: 8px; padding: 2px 0 0 16px; color: #c9dfd2; }
.tabs .share { gap: 10px; margin-left: auto; padding: 1px 6px 0 0; }

/* ribbon */
.ribbon { display: flex; flex: none; height: 132px; padding: 4px 0; background: #f3f3f3; border-bottom: 1px solid #d2d2d2; }
.group { display: flex; flex-direction: column; flex: none; border-right: 1px solid #d2d2d2; }
.body { display: flex; flex: 1; }
.foot { display: flex; align-items: center; height: 18px; font-size: 15px; line-height: 18px; color: #444; }
.foot span { flex: 1; text-align: center; }
.foot button { display: grid; place-items: center; width: 24px; height: 18px; }
.g-clip { width: 219px; }
.g-font { width: 267px; }
.g-align { width: 357px; }
.g-num { width: 182px; }
.g-styles { width: 262px; }
.g-cells { width: 187px; }
.g-edit { width: 259px; }
.big { display: flex; flex-direction: column; align-items: center; flex: none; padding-top: 5px; }
.big svg { margin-bottom: 2px; }
.big span { display: flex; align-items: center; height: 24px; }
.paste { width: 70px; padding-right: 2px; }
.rows.tall { margin-left: -4px; }
.cond { width: 104px; }
.tbl { width: 86px; }
.cell { width: 58px; }
.ins { width: 62px; }
.del { width: 54px; }
.fmt { width: 66px; }
.sort { width: 58px; }
.find { width: 64px; }
.g-styles .body { padding-left: 5px; }
.g-cells .body { padding-left: 2px; }
.g-edit .body { padding-left: 8px; }
.rows { display: flex; flex-direction: column; }
.rows button { display: flex; align-items: center; gap: 4px; height: 30px; }
.rows.tall button { height: 33px; }
.g-edit .rows { width: 124px; }
.lines { display: flex; flex-direction: column; gap: 12px; padding: 12px 0 0 4px; }
.g-num .lines { padding-left: 3px; }
.line { display: flex; align-items: center; height: 32px; }
.ic { display: grid; place-items: center; flex: none; width: 30px; height: 32px; color: #555; }
.ic.on { background: #c6c6c6; }
.sep { width: 10px; height: 30px; flex: none; background: linear-gradient(#d2d2d2, #d2d2d2) center / 1px 100% no-repeat; }
.bold { font-size: 21px; font-weight: 800; }
.italic { font: italic 700 24px/30px "Liberation Serif", serif; }
.under { font-size: 20px; font-weight: 600; text-decoration: underline; }
.sym { font-size: 24px; }
.merge { align-self: flex-start; height: 88px; margin: 5px 0 0 3px; padding: 7px 0 0 7px; border-left: 1px solid #d2d2d2; }
.merge .line { gap: 4px; }
.combo, .namebox { height: 32px; padding-left: 5px; border: 1px solid #c6c6c6; background: #fff url("data:image/svg+xml,%3Csvg xmlns='http://www.w3.org/2000/svg' width='8' height='4'%3E%3Cpath fill='%23666' d='M0 0h8L4 4z'/%3E%3C/svg%3E") right 5px center no-repeat; color: #444; }
.font-name { width: 134px; }
.font-size { width: 64px; border-left: 0; }
.num-format { width: 174px; }
.collapse { margin: auto 11px 4px auto; }

/* formula bar */
.formula { display: flex; align-items: center; flex: none; height: 65px; padding: 0 7px; }
.namebox { width: 152px; height: 35px; background-color: #fdfdfd; background-position: right 10px center; padding-left: 7px; }
.formula .dots { margin: 0 22px 0 20px; }
.fxbox { display: flex; width: 165px; height: 35px; border: 1px solid #c6c6c6; background: #fdfdfd; }
.fxbox button { flex: 1; display: grid; place-items: center; }
.fxbox .fx { display: block; font: italic 400 25px/30px "Liberation Serif", serif; color: #555; }
.fx small { font-size: 20px; }
.entry { display: flex; flex: 1; height: 35px; margin-left: 3px; padding: 0 7px 0 16px; border: 1px solid #c6c6c6; background: #fdfdfd; align-items: center; color: #444; }
.entry input { flex: 1; outline: 0; }

/* worksheet */
.work { position: relative; display: flex; flex: 1; min-height: 0; border-bottom: 1px solid #999; }
.sheet { position: relative; flex: 1; min-width: 0; overflow: hidden; }
.grid { width: 100%; table-layout: fixed; border-collapse: separate; border-spacing: 0; font: 26px/37px "DejaVu Sans Mono", monospace; color: #000; }
.c-num { width: 54px; }
.c-id { width: 239px; }
.c { width: 182px; }
.grid th, .grid td { height: 38px; padding: 0; text-align: center; white-space: pre; overflow: hidden; }
.grid td { background: #eeece1; border: solid #4f80bd; border-width: 0 1px 1px 0; }
.grid td:last-child { border-right-color: #999; }
.grid th { font: 25px/36px "Open Sans", "Noto Sans", sans-serif; background: #e6e6e6; border: solid #b5b5b5; border-width: 0 1px 1px 0; }
.grid thead th { border-bottom-color: #999; }
.grid .corner svg { margin: 4px 0 2px 20px; }
.grid thead .gapcol { border-left: 1px solid #b5b5b5; box-shadow: inset 3px 0 #e6e6e6, inset 4px 0 #b5b5b5; }
.grid .sel { background: #d2d2d2; color: #1e6b40; }
.grid thead .sel { border-bottom: 2px solid #217346; border-right: 0; }
.grid tbody .sel { border-right: 2px solid #217346; }
.grid .names td { background: #4f80bd; color: #fff; }
.grid .cursor { position: relative; outline: 2px solid #217346; outline-offset: -1px; box-shadow: inset 0 0 0 2px #fff; }
.redaction { position: absolute; left: 104px; top: 86px; bottom: 3px; width: 123px; background: #000; }
.vscroll { display: flex; flex-direction: column; width: 30px; padding: 1px 3px 0 2px; flex: none; }
.vscroll button, .hscroll button { display: grid; place-items: center; width: 25px; height: 25px; flex: none; background: #fff; border: 1px solid #c6c6c6; }
.vscroll .thumb { height: 26px; background: #fff; border: 1px solid #aaa; }
.vscroll .track { flex: 1; background: #dadada; }
.dropbox { position: absolute; right: -11px; top: 192px; width: 54px; height: 54px; display: grid; place-items: center; border-radius: 50%; background: #007ee5; box-shadow: 0 1px 6px #0006; }

/* sheet tabs */
.sheets { display: flex; flex: none; height: 34px; align-items: flex-start; border-bottom: 1px solid #c6c6c6; font-size: 17px; color: #444; }
.arrows { display: flex; gap: 28px; width: 118px; padding: 10px 0 0 29px; }
.tab { height: 30px; padding-bottom: 2px; border-right: 1px solid #999; font-size: 18px; }
.t-core { width: 67px; border-left: 1px solid #999; border-right: 0; }
.t-ses { width: 104px; margin-top: -1px; height: 32px; background: #fff; border: solid #999; border-width: 0 1px; border-bottom: 2px solid #217346; color: #217346; font-weight: 700; position: relative; }
.t-sup { width: 174px; padding-right: 6px; }
.t-hea { width: 152px; padding-right: 4px; }
.t-pap { width: 62px; }
.t-nav { width: 128px; }
.add { margin: 4px 0 0 40px; }
.sheets .dots { margin: 8px 16px 0 auto; }
.hscroll { display: flex; flex: 0 1 724px; margin: 3px 29px 0 0; }
.hscroll .thumb { flex: 621; height: 25px; background: #fff; border: 1px solid #aaa; border-left: 0; }
.hscroll .track { flex: 53; height: 25px; background: #dadada; }

/* status bar */
.status { display: flex; align-items: center; flex: none; height: 32px; padding: 0 8px 1px 0; background: #f3f3f3; font-size: 15px; color: #444; }
.ready { margin: 0 auto 0 8px; }
.view { display: grid; place-items: center; width: 45px; height: 100%; }
.view.on { background: #c6c6c6; }
.zoom { margin: 0 6px 0 5px; }
.view + .zoom { margin-left: 6px; }
.slider { appearance: none; width: 148px; height: 22px; background: linear-gradient(#aaa, #aaa) center / 100% 2px no-repeat, linear-gradient(#aaa, #aaa) center / 2px 10px no-repeat; }
.slider::-webkit-slider-thumb { appearance: none; width: 8px; height: 22px; background: #777; }
.pct { margin-left: 6px; width: 40px; text-align: right; }

/* taskbar */
.taskbar { display: flex; flex: none; height: 60px; color: #fff; background: linear-gradient(90deg, #2f3333 0, #26302f 3%, #042338 5%, #042338 10%, #2b2d2d 15%, #2f3030 30%, #20302f 38%, #052e3a 46%, #032836 60%, #051232 75%, #060f2e 85%, #042034 95%, #042a3c); }
.taskbar button { display: grid; place-items: center; height: 60px; flex: none; }
.apps { display: grid; grid-template-columns: repeat(13, 75px); }
.taskbar .open { background: linear-gradient(#7cabf0, #7cabf0) center bottom / 61px 3px no-repeat; }
.taskbar .current { background: linear-gradient(#7cabf0, #7cabf0) center bottom / 100% 3px no-repeat, #3a5a62; }
.tray { display: grid; grid-template-columns: repeat(15, 48px); margin-left: auto; }
.box { font-size: 15px; font-weight: 600; }
.clock { display: flex; flex-direction: column; justify-content: center; gap: 4px; width: 104px; text-align: center; }
.notes { width: 60px; }
.desk { width: 20px; background: linear-gradient(#7b8794, #7b8794) 12px 0 / 1px 100% no-repeat; }
```
